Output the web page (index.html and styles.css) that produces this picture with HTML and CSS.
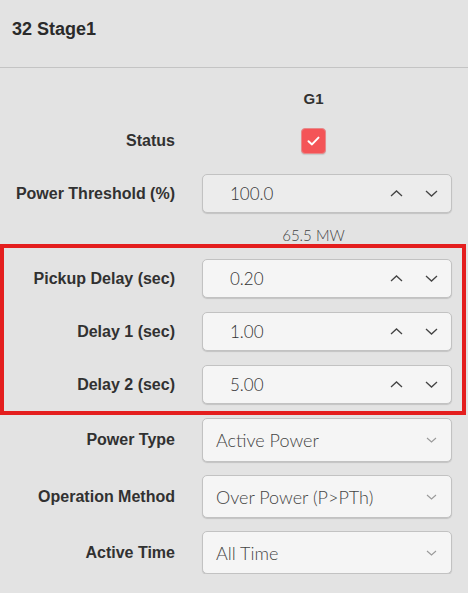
FILE: index.html
```html
<!DOCTYPE html>
<html>
<head>
<meta charset="utf-8">
<link rel="stylesheet" href="styles.css">
</head>
<body>
<header class="header">32 Stage1</header>
<main class="form">
  <div class="row row-head">
    <div class="label"></div>
    <div class="cell col-title">G1</div>
  </div>
  <div class="row row-status">
    <div class="label">Status</div>
    <div class="cell">
      <span class="checkbox">
        <svg width="13" height="10" viewBox="0 0 13 10"><path d="M1.5 5.2 L5 8.4 L11.5 1.6" fill="none" stroke="#fff" stroke-width="2" stroke-linecap="round" stroke-linejoin="round"/></svg>
      </span>
    </div>
  </div>
  <div class="row row-field">
    <div class="label">Power Threshold (%)</div>
    <div class="field stepper dim">
      <span class="value">100.0</span>
      <span class="arrows">
        <svg width="13" height="7" viewBox="0 0 13 7"><path d="M1 6 L6.5 1 L12 6" fill="none" stroke="#444" stroke-width="1.3"/></svg>
        <svg width="13" height="7" viewBox="0 0 13 7"><path d="M1 1 L6.5 6 L12 1" fill="none" stroke="#444" stroke-width="1.3"/></svg>
      </span>
    </div>
  </div>
  <div class="row row-note">
    <div class="label"></div>
    <div class="cell note">65.5 MW</div>
  </div>
  <section class="highlight">
    <div class="row row-field">
      <div class="label">Pickup Delay (sec)</div>
      <div class="field stepper">
        <span class="value">0.20</span>
        <span class="arrows">
          <svg width="13" height="7" viewBox="0 0 13 7"><path d="M1 6 L6.5 1 L12 6" fill="none" stroke="#444" stroke-width="1.3"/></svg>
          <svg width="13" height="7" viewBox="0 0 13 7"><path d="M1 1 L6.5 6 L12 1" fill="none" stroke="#444" stroke-width="1.3"/></svg>
        </span>
      </div>
    </div>
    <div class="row row-field">
      <div class="label">Delay 1 (sec)</div>
      <div class="field stepper">
        <span class="value">1.00</span>
        <span class="arrows">
          <svg width="13" height="7" viewBox="0 0 13 7"><path d="M1 6 L6.5 1 L12 6" fill="none" stroke="#444" stroke-width="1.3"/></svg>
          <svg width="13" height="7" viewBox="0 0 13 7"><path d="M1 1 L6.5 6 L12 1" fill="none" stroke="#444" stroke-width="1.3"/></svg>
        </span>
      </div>
    </div>
    <div class="row row-field">
      <div class="label">Delay 2 (sec)</div>
      <div class="field stepper">
        <span class="value">5.00</span>
        <span class="arrows">
          <svg width="13" height="7" viewBox="0 0 13 7"><path d="M1 6 L6.5 1 L12 6" fill="none" stroke="#444" stroke-width="1.3"/></svg>
          <svg width="13" height="7" viewBox="0 0 13 7"><path d="M1 1 L6.5 6 L12 1" fill="none" stroke="#444" stroke-width="1.3"/></svg>
        </span>
      </div>
    </div>
  </section>
  <div class="row row-select first">
    <div class="label">Power Type</div>
    <div class="field select">
      <span class="sel-value">Active Power</span>
      <svg width="11" height="6" viewBox="0 0 11 6"><path d="M1 1 L5.5 5 L10 1" fill="none" stroke="#9a9a9a" stroke-width="1.1"/></svg>
    </div>
  </div>
  <div class="row row-select">
    <div class="label">Operation Method</div>
    <div class="field select">
      <span class="sel-value">Over Power (P&gt;PTh)</span>
      <svg width="11" height="6" viewBox="0 0 11 6"><path d="M1 1 L5.5 5 L10 1" fill="none" stroke="#9a9a9a" stroke-width="1.1"/></svg>
    </div>
  </div>
  <div class="row row-select">
    <div class="label">Active Time</div>
    <div class="field select">
      <span class="sel-value">All Time</span>
      <svg width="11" height="6" viewBox="0 0 11 6"><path d="M1 1 L5.5 5 L10 1" fill="none" stroke="#9a9a9a" stroke-width="1.1"/></svg>
    </div>
  </div>
</main>
</body>
</html>
```

FILE: styles.css
```css
* { box-sizing: border-box; }

html, body {
  margin: 0;
  padding: 0;
  background: #e3e3e3;
  font-family: "Liberation Sans", Arial, sans-serif;
  color: #333;
}

.header {
  height: 68px;
  padding-left: 12px;
  line-height: 58px;
  font-size: 18px;
  font-weight: 700;
  color: #2a2a2a;
  border-bottom: 1px solid #c4c4c4;
}

.form {
  padding-right: 16px;
}

.row {
  display: flex;
  align-items: center;
}

.label {
  width: 175px;
  flex: none;
  text-align: right;
  font-size: 16px;
  font-weight: 700;
  color: #313131;
}

.cell {
  flex: 1;
  display: flex;
  justify-content: center;
}

.row-head {
  margin-top: 20px;
  height: 20px;
}

.col-title {
  font-size: 15px;
  font-weight: 700;
  color: #313131;
}

.row-status {
  margin-top: 20px;
  height: 26px;
}

.checkbox {
  width: 25px;
  height: 26px;
  border-radius: 4px;
  background: #f45457;
  border: 1px solid #e7898a;
  display: flex;
  align-items: center;
  justify-content: center;
  box-shadow: 0 1px 1px rgba(0,0,0,0.12);
}

.row-field {
  height: 39px;
  margin-top: 20px;
}

.field {
  flex: 1;
  margin-left: 27px;
  height: 100%;
  border: 1px solid #c2c2c2;
  border-radius: 5px;
  background: #f5f5f5;
  box-shadow: 0 1px 1px rgba(0,0,0,0.14);
  display: flex;
  align-items: center;
}

.field.dim {
  background: #ececec;
}

.value {
  flex: 1;
  padding-left: 27px;
  font-family: Lato, "Liberation Sans", sans-serif;
  font-weight: 300;
  font-size: 17px;
  color: #333;
}

.arrows {
  display: flex;
  gap: 22px;
  padding-right: 13px;
}

.arrows svg {
  display: block;
}

.row-note {
  height: 31px;
}

.note {
  padding-top: 13px;
  line-height: 16px;
  font-family: Lato, "Liberation Sans", sans-serif;
  font-weight: 300;
  font-size: 15px;
  color: #444;
}

.highlight {
  margin-right: -14px;
  border: 4px solid #e41e1e;
  padding: 11px 10px 7px 0;
}

.highlight .label {
  width: 171px;
}

.highlight .row-field {
  margin-top: 14px;
}

.highlight .row-field:first-child {
  margin-top: 0;
}

.row-select {
  height: 43px;
  margin-top: 13px;
}

.row-select.first {
  margin-top: 3px;
  height: 44px;
}

.select {
  padding-left: 13px;
  padding-right: 14px;
}

.sel-value {
  flex: 1;
  font-family: Lato, "Liberation Sans", sans-serif;
  font-weight: 300;
  font-size: 18px;
  color: #444;
}

.select svg {
  display: block;
}
```
